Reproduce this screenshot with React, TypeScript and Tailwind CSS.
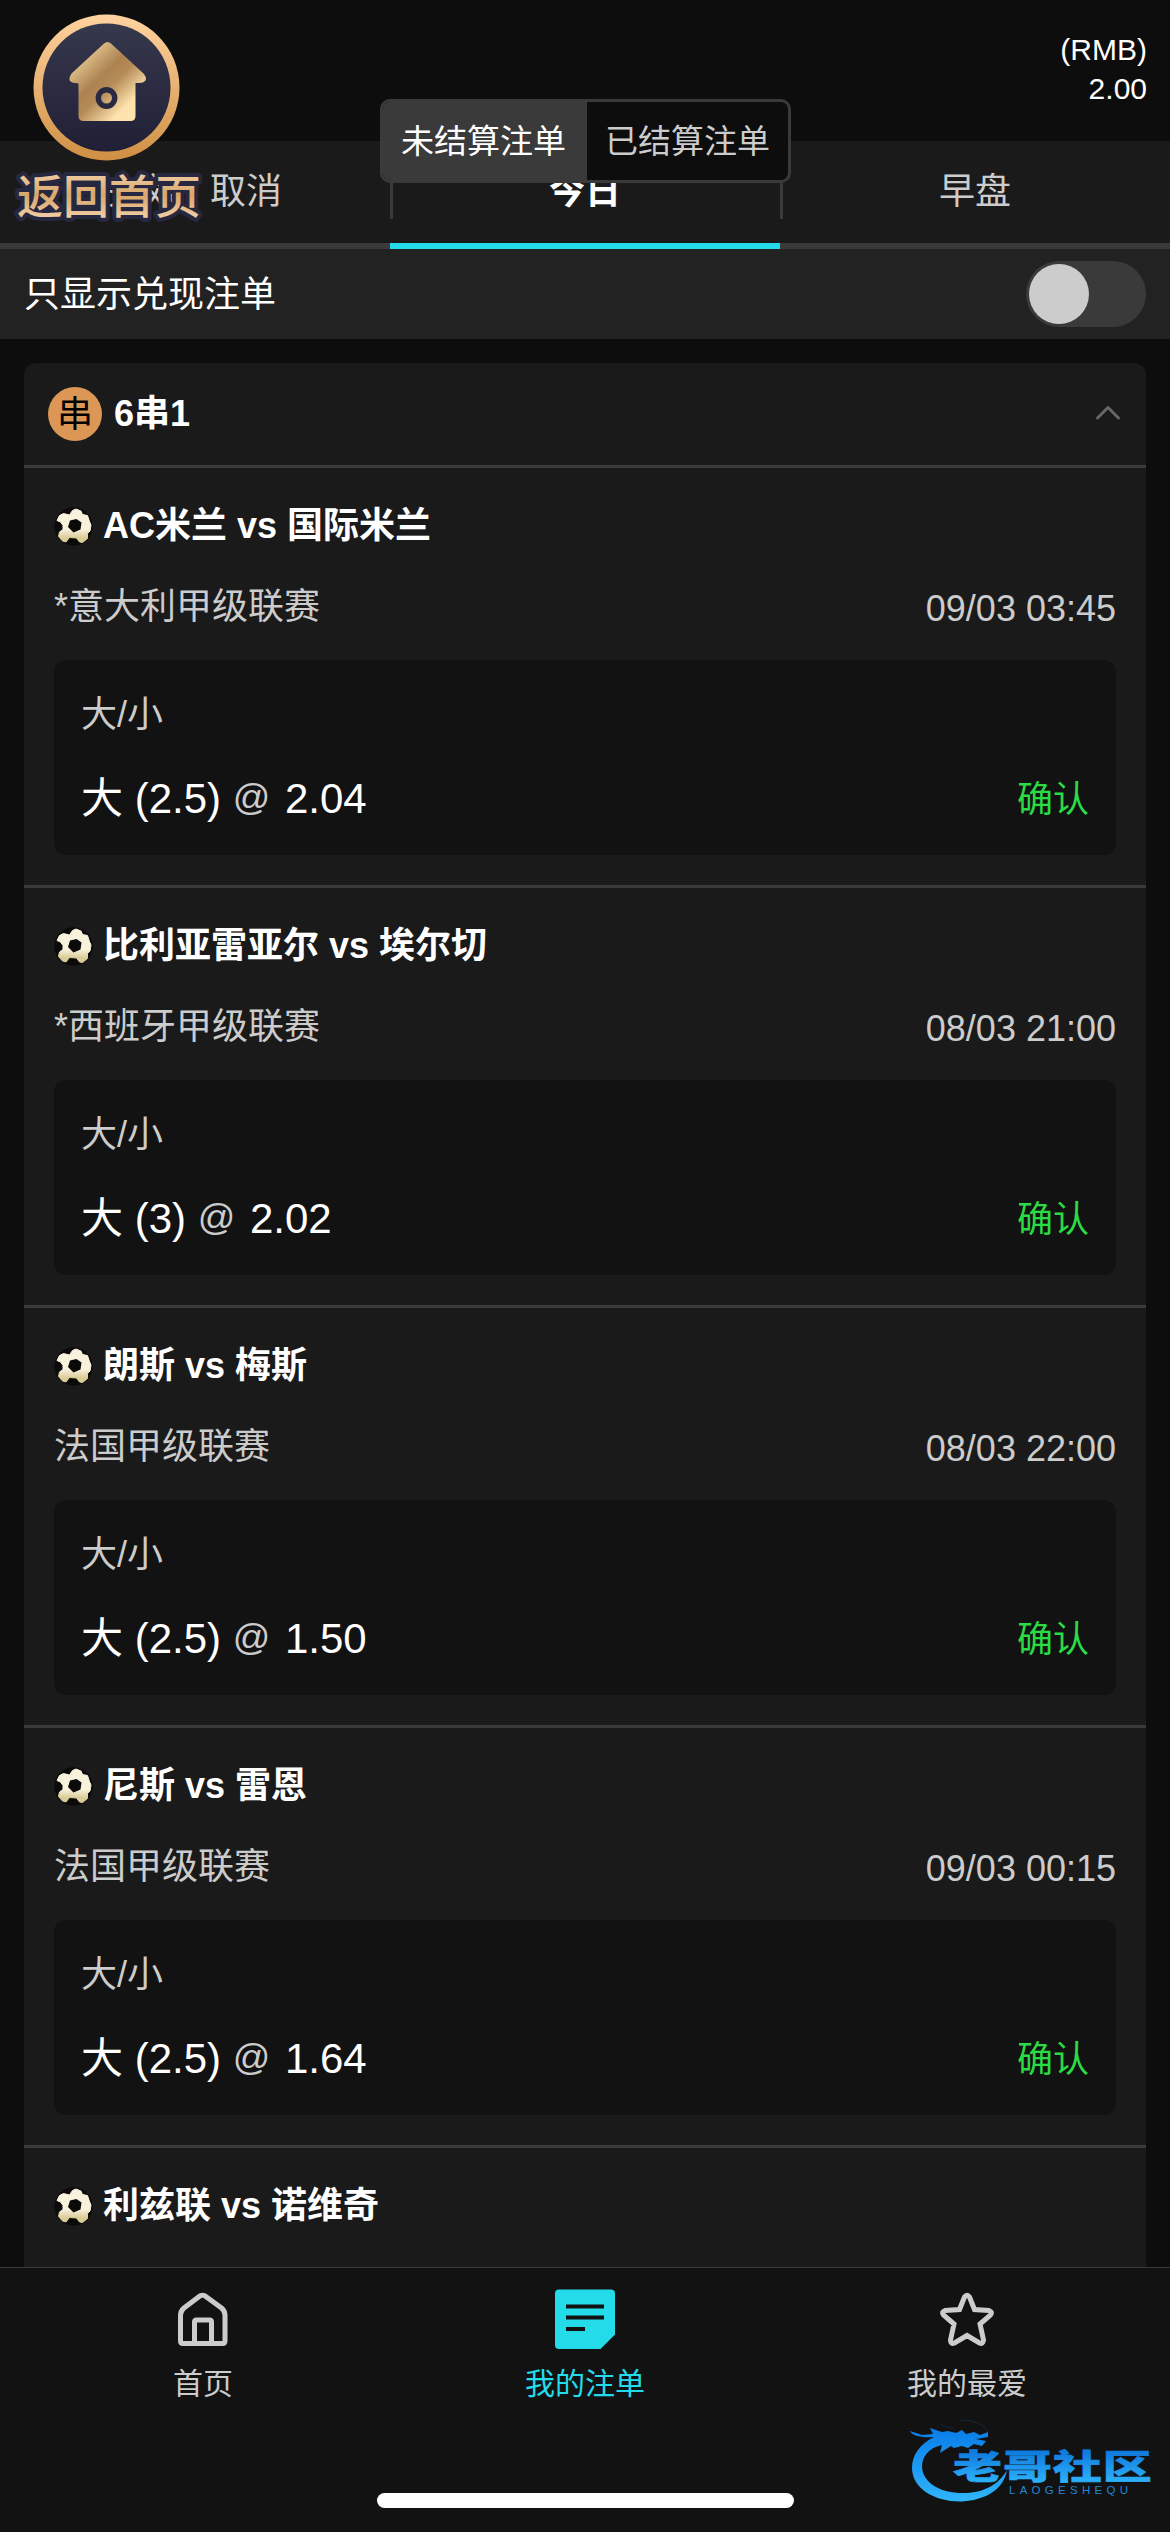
import clsx from "clsx";

type Leg = {
  teams: string;
  league?: string;
  time?: string;
  pick?: string;
  odds?: string;
};

const legs: Leg[] = [
  { teams: "AC米兰 vs 国际米兰", league: "*意大利甲级联赛", time: "09/03 03:45", pick: "大 (2.5)", odds: "2.04" },
  { teams: "比利亚雷亚尔 vs 埃尔切", league: "*西班牙甲级联赛", time: "08/03 21:00", pick: "大 (3)", odds: "2.02" },
  { teams: "朗斯 vs 梅斯", league: "法国甲级联赛", time: "08/03 22:00", pick: "大 (2.5)", odds: "1.50" },
  { teams: "尼斯 vs 雷恩", league: "法国甲级联赛", time: "09/03 00:15", pick: "大 (2.5)", odds: "1.64" },
  { teams: "利兹联 vs 诺维奇" }
];

const tabs = ["失效 / 取消", "今日", "早盘"];

function BallIcon() {
  return (
    <svg viewBox="0 0 39 39" className="h-[39px] w-[39px] shrink-0">
      <defs>
        <linearGradient id="ball" x1="0" y1="2" x2="0" y2="36" gradientUnits="userSpaceOnUse">
          <stop offset="0.6" stopColor="#f8f1dc" />
          <stop offset="0.85" stopColor="#d9cc98" />
        </linearGradient>
      </defs>
      <circle cx="19.5" cy="19.5" r="19.2" fill="#0a0a0a" />
      <path
        fill="url(#ball)"
        stroke="url(#ball)"
        strokeWidth="1"
        strokeLinejoin="round"
        d="M18.500 3.500 22 2 27 4 28.500 7.500 33.500 8.500 35.500 14.500 37 18 36 24 33.500 26.500 33.500 31.500 28.500 35.500 25.500 35 22.500 31 15.500 30.500 12 35 8.500 34 4.500 29.500 5.500 25 9 22.500 9 18.500 6.500 15 3 13.500 5.500 8.500 9.500 6.500 15.500 8Z"
      />
      <path fill="#0a0a0a" d="M16 13.500 22.500 12 27.500 15.500 26.500 22.500 19.500 25.500 14 20Z" />
    </svg>
  );
}

function HomeBadge() {
  return (
    <svg viewBox="0 0 148 148" className="h-[148px] w-[148px]">
      <defs>
        <linearGradient id="ring" x1="0" y1="0" x2="0" y2="1">
          <stop offset="0" stopColor="#ffd3a0" />
          <stop offset="1" stopColor="#cf8f43" />
        </linearGradient>
        <linearGradient id="disc" x1="0" y1="0" x2="0" y2="1">
          <stop offset="0" stopColor="#36384c" />
          <stop offset="1" stopColor="#201f36" />
        </linearGradient>
        <linearGradient id="gold" x1="0.1" y1="0.1" x2="0.85" y2="0.9">
          <stop offset="0.1" stopColor="#e2c48e" />
          <stop offset="0.42" stopColor="#ac8350" />
          <stop offset="0.58" stopColor="#b58c58" />
          <stop offset="0.88" stopColor="#ffe3ae" />
        </linearGradient>
      </defs>
      <circle cx="73.500" cy="74.500" r="73" fill="url(#ring)" />
      <circle cx="73.500" cy="74.500" r="64" fill="url(#disc)" />
      <path
        fill="url(#gold)"
        d="M71 30.500Q74.500 27.500 78 30.500L110.500 60.500Q114 64.500 112.500 67.500 110.500 70 106 70L102.500 70V103Q102.500 108 97.500 108H50.500Q45.500 108 45.500 103V70.500L42 70Q37.500 69.500 36.500 67 36 64 38.500 60.500Z"
      />
      <circle cx="73.500" cy="85" r="8.200" fill="none" stroke="#292a42" strokeWidth="5.400" />
    </svg>
  );
}

function HomeLabel() {
  return (
    <svg viewBox="0 0 195 66" className="-mr-[4px] h-[66px] w-[195px]">
      <defs>
        <linearGradient id="label" x1="0" y1="12" x2="0" y2="56" gradientUnits="userSpaceOnUse">
          <stop offset="0" stopColor="#f0cda4" />
          <stop offset="0.5" stopColor="#d8a66a" />
          <stop offset="1" stopColor="#f0cda4" />
        </linearGradient>
      </defs>
      <text
        x="6"
        y="52"
        fontSize="46"
        fontWeight="500"
        fill="url(#label)"
        stroke="#27283f"
        strokeWidth="8"
        strokeLinejoin="round"
        paintOrder="stroke"
        fontFamily="'Noto Sans CJK SC', sans-serif"
      >
        返回首页
      </text>
    </svg>
  );
}

function Watermark() {
  return (
    <svg viewBox="0 0 270 110" className="absolute right-0 bottom-[12px] h-[110px] w-[270px]">
      <defs>
        <linearGradient id="dragon" x1="0" y1="20" x2="0" y2="90" gradientUnits="userSpaceOnUse">
          <stop offset="0" stopColor="#0a7de8" />
          <stop offset="1" stopColor="#2fb4fb" />
        </linearGradient>
        <linearGradient id="mark" x1="0" y1="0" x2="0" y2="1">
          <stop offset="0.15" stopColor="#0a72da" />
          <stop offset="0.9" stopColor="#2fb4fb" />
        </linearGradient>
      </defs>
      <path
        fill="url(#dragon)"
        d="M34 27C20 34 12 45 12 58C12 78 34 92 62 91.500C86 90 104 79 107 60C98 76 82 83 63 83C40 83 23 73 22 57C22 47 28 38 42 35L40 43 51 36 54 38 62 36 68 38 74 34 82 36 86 31 76 29 88 27 88 22 80 25 74 22 66 24 62 20 56 23 48 21 42 22 30 18 33 24 22 25 10 21C12 26 22 28 34 27Z"
      />
      <path d="M40 13Q44 18 54 18M60 10Q82 10 88 22" fill="none" stroke="#12293f" strokeWidth="1" />
      <text
        x="0"
        y="0"
        transform="translate(53 69) scale(1.44 1)"
        fill="url(#mark)"
        stroke="url(#mark)"
        strokeWidth="0.6"
        fontSize="34"
        fontWeight="900"
        textLength="138"
        fontFamily="'Noto Sans CJK SC', sans-serif"
      >
        老哥社区
      </text>
      <text
        x="109"
        y="84"
        fill="#2187d4"
        fontSize="11.500"
        textLength="119"
        fontFamily="'Liberation Sans', sans-serif"
      >
        LAOGESHEQU
      </text>
    </svg>
  );
}

function LegItem({ leg }: { leg: Leg }) {
  return (
    <div className="h-[420px] border-t-[3px] border-[#3a3a3a] px-[30px] pt-[39px]">
      <div className="flex h-[39px] items-center gap-[10px]">
        <BallIcon />
        <span className="relative top-[-1px] text-[36px] leading-[39px] font-bold text-white">{leg.teams}</span>
      </div>
      {leg.league ? (
        <>
          <div className="mt-[37px] flex h-[48px] justify-between text-[36px] leading-[48px] text-[#ccc]">
            <span>{leg.league}</span>
            <span className="pt-[2px]">{leg.time}</span>
          </div>
          <div className="mt-[29px] h-[195px] rounded-[12px] bg-[#121212] px-[27px] pt-[28px]">
            <p className="text-[36px] leading-[54px] text-[#ccc]">大/小</p>
            <div className="mt-[28px] flex h-[60px] items-center justify-between leading-[60px]">
              <span className="text-[42px] text-white">
                {leg.pick} <span className="relative top-[-3px] mr-[3px] text-[37px] text-[#ccc]">@</span> {leg.odds}
              </span>
              <span className="text-[36px] text-[#2adb44]">确认</span>
            </div>
          </div>
        </>
      ) : null}
    </div>
  );
}

export default function App() {
  return (
    <div className="relative flex h-[2532px] w-[1170px] flex-col overflow-hidden bg-[#0d0d0d] font-['Liberation_Sans','Noto_Sans_CJK_SC',sans-serif]">
      <header className="h-[141px] shrink-0 px-[23px] pt-[30px] text-right text-[30px] leading-[39px] text-white">
        <p>(RMB)</p>
        <p>2.00</p>
      </header>

      <nav className="grid h-[108px] shrink-0 grid-cols-3 bg-[#1a1a1a]">
        {tabs.map((tab) => (
          <div
            key={tab}
            className={clsx(
              "relative border-b-[6px] text-center text-[36px] leading-[102px]",
              tab === "今日" ? "border-[#24dce9] font-bold text-white" : "border-[#3a3a3a] text-[#ccc]"
            )}
          >
            {tab !== tabs[0] ? <span className="absolute top-[24px] left-0 h-[54px] w-[3px] bg-[#3a3a3a]" /> : null}
            {tab}
          </div>
        ))}
      </nav>

      <div className="flex h-[90px] shrink-0 items-center justify-between bg-[#222] px-[24px]">
        <span className="pt-[2px] text-[36px] leading-[54px] text-white">只显示兑现注单</span>
        <span className="flex h-[66px] w-[120px] items-center rounded-full bg-[#3a3a3a] pl-[3px]">
          <span className="h-[60px] w-[60px] rounded-full bg-[#ccc]" />
        </span>
      </div>

      <main className="min-h-0 flex-1 overflow-hidden px-[24px] pt-[24px]">
        <section className="rounded-t-[12px] bg-[#1a1a1a]">
          <div className="flex h-[102px] items-center px-[24px]">
            <span className="flex h-[54px] w-[54px] items-center justify-center rounded-full bg-[#dc9757] pt-[2px] text-[36px] leading-[54px] text-black">
              串
            </span>
            <span className="ml-[12px] flex-1 text-[36px] leading-[54px] font-bold text-white">6串1</span>
            <svg viewBox="0 0 30 30" className="h-[30px] w-[30px]" fill="none" stroke="#666" strokeWidth="3">
              <path d="M5.500 19 16 8.500 26.500 19" strokeLinecap="round" strokeLinejoin="round" />
            </svg>
          </div>
          {legs.map((leg) => (
            <LegItem key={leg.teams} leg={leg} />
          ))}
        </section>
      </main>

      <footer className="relative h-[265px] shrink-0 border-t border-[#3a3a3a] bg-[#121212] px-[12px] pt-[21px]">
        <div className="grid grid-cols-3 text-center text-[30px] leading-[45px] text-[#ccc]">
          <div className="flex flex-col items-center gap-[12px]">
            <svg viewBox="0 0 60 60" className="h-[60px] w-[60px]" fill="none" stroke="#ccc" strokeWidth="5">
              <path d="M25.500 8Q29.500 4.500 33.500 8L48.500 19Q52 22 52 26V52Q52 54.500 49.500 54.500H10Q7.500 54.500 7.500 52V26Q7.500 22 11 19Z" />
              <path d="M21.500 54V33Q21.500 31 23.500 31H36.500Q38.500 31 38.500 33V54" />
            </svg>
            首页
          </div>
          <div className="flex flex-col items-center gap-[12px] text-[#24dce9]">
            <svg viewBox="0 0 60 60" className="h-[60px] w-[60px]">
              <path fill="#24dce9" d="M4 0.500H56Q60 0.500 60 4.500V45.500L45.500 60H4Q0 60 0 56V4.500Q0 0.500 4 0.500Z" />
              <path stroke="#121212" strokeWidth="4" d="M11 17.500H49M11 28.500H49M11 40H30" />
            </svg>
            我的注单
          </div>
          <div className="flex flex-col items-center gap-[12px]">
            <svg viewBox="0 0 60 60" className="h-[60px] w-[60px]" fill="none" stroke="#ccc" strokeWidth="5">
              <path d="M27.500 8Q30 4.500 32.500 8L37.500 20.500 52 21.500Q56 23 53.500 26L43 35 46.500 51Q46 55.500 42.500 54L30 46.500 17.500 54Q13.500 55.500 13.500 51L17 35 6.500 26Q4 23 8 21.500L22.500 20.500Z" />
            </svg>
            我的最爱
          </div>
        </div>
        <Watermark />
        <span className="absolute bottom-[24px] left-[377px] h-[15px] w-[417px] rounded-full bg-white" />
      </footer>

      <div className="absolute top-[99px] left-[380px] flex h-[84px] w-[411px] overflow-hidden rounded-[10px] border-[3px] border-[#3a3a3a] bg-[#0d0d0d] text-[33px] leading-[80px]">
        <span className="w-[204px] bg-[#3a3a3a] pl-[18px] text-white">未结算注单</span>
        <span className="pl-[18px] text-[#ccc]">已结算注单</span>
      </div>

      <div className="absolute top-[13px] left-[11px] flex w-[191px] flex-col items-center">
        <HomeBadge />
        <HomeLabel />
      </div>
    </div>
  );
}
